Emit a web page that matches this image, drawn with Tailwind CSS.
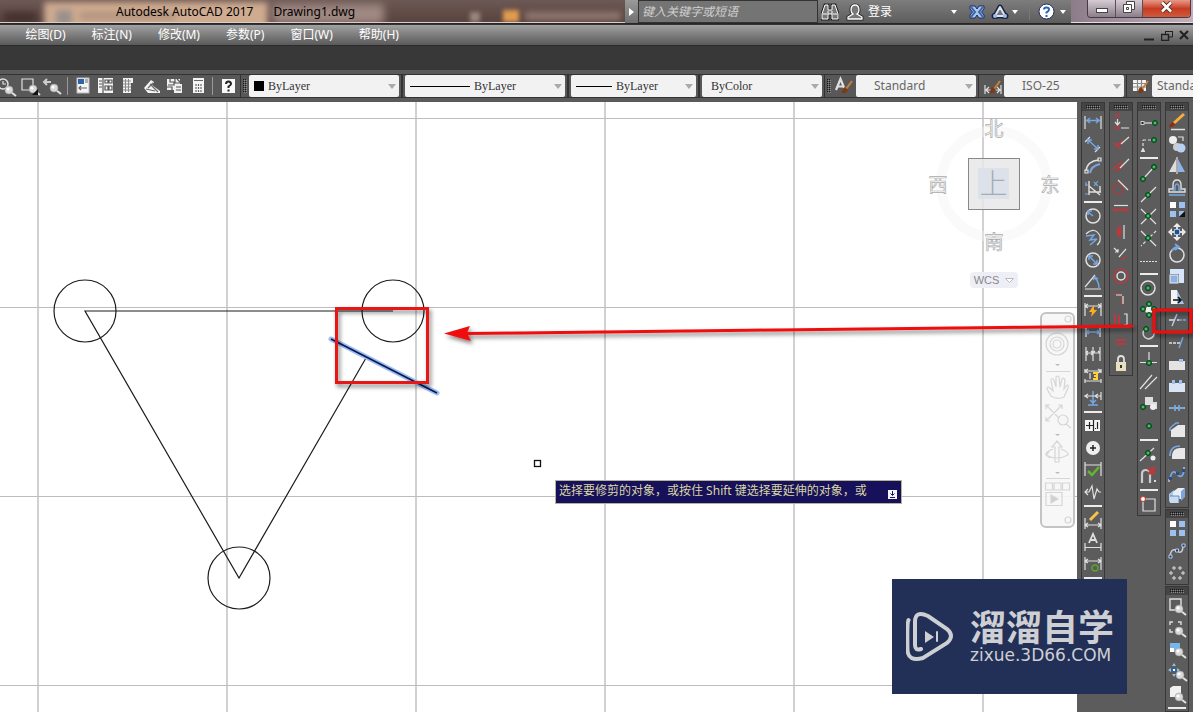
<!DOCTYPE html>
<html lang="zh-CN">
<head>
<meta charset="utf-8">
<meta name="viewport" content="width=device-width, initial-scale=1">
<title>Autodesk AutoCAD 2017 - Drawing1.dwg</title>
<script src="https://cdn.jsdelivr.net/npm/@tailwindcss/browser@4"></script>
</head>
<body class="relative flex h-screen flex-col overflow-hidden bg-[#5c5c5c] font-['Noto_Sans','Noto_Sans_CJK_SC',sans-serif] text-xs">

<!-- Title bar -->
<header class="flex h-6 shrink-0 border-b border-[#2b2626] bg-[#5b4743]">
  <div class="relative min-w-0 flex-1 overflow-hidden border-b border-[#d8cfca] bg-linear-to-b from-[#6c5854] to-[#59433f]">
    <div class="absolute top-0.5 left-11 h-7 w-56 bg-[#cfac90] blur-[3px]"></div>
    <div class="absolute top-2.5 left-14 h-4 w-4 bg-[#9a8f8c] blur-[3px]"></div>
    <div class="absolute top-3 left-20 h-2 w-24 bg-[#b3947e] blur-[3px]"></div>
    <div class="absolute top-1 left-68 h-5 w-28 bg-[#a08983] blur-[4px]"></div>
    <div class="absolute top-3 left-1 h-3 w-8 bg-[#46332f] blur-[3px]"></div>
    <div class="absolute top-3 left-[470px] h-2.5 w-2.5 bg-[#9b8680] blur-[2px]"></div>
    <div class="absolute top-2.5 left-[503px] h-3 w-4 bg-[#e09b50] blur-[2px]"></div>
    <div class="absolute top-3 left-[525px] h-2 w-24 bg-[#927a72] blur-[3px]"></div>
    <h1 class="relative flex gap-5 pt-0.5 pl-[116px] leading-5 whitespace-nowrap text-black"><span>Autodesk AutoCAD 2017</span><span>Drawing1.dwg</span></h1>
  </div>
  <div class="flex shrink-0 items-center bg-linear-to-b from-[#7d7d7d] to-[#5d5d5d] text-white">
    <button aria-label="展开搜索" class="flex h-full w-[13px] items-center justify-center bg-linear-to-b from-[#9a9a9a] to-[#707070]"><svg width="5" height="8"><path d="M0 0L5 4L0 8Z" fill="#fff"/></svg></button>
    <input aria-label="搜索" placeholder="键入关键字或短语" class="h-full w-[180px] border border-[#333] bg-[#747474] px-[3px] italic outline-none placeholder:text-[#d0d0d0]">
    <button aria-label="查找" class="flex w-[24px] justify-center"><svg width="18" height="18" fill="#777" stroke="#222" stroke-width="3"><path d="M4 2h3v5h4V2h3l3 9v5h-6v-5H7v5H1v-5Z"/><path d="M4 2h3v5h4V2h3l3 9v5h-6v-5H7v5H1v-5Z" stroke="#fff" stroke-width="1"/><path d="M7 8v3M11 8v3M2 11h4M12 11h4" stroke="#fff" stroke-width="1"/></svg></button>
    <button class="flex items-center gap-1 pl-1 text-xs leading-5"><svg width="18" height="18" fill="#777" stroke="#222" stroke-width="3"><path d="M9 2q4 0 4 5q0 3-2 4l5 3v2H2v-2l5-3q-2-1-2-4q0-5 4-5Z"/><path d="M9 2q4 0 4 5q0 3-2 4l5 3v2H2v-2l5-3q-2-1-2-4q0-5 4-5Z" stroke="#fff" stroke-width="1.3"/></svg>登录</button>
    <button aria-label="登录选项" class="ml-[59px] w-2"><svg width="6" height="4"><path d="M0 0H6L3 4Z" fill="#fff"/></svg></button>
    <button aria-label="Exchange" class="ml-2.5"><svg width="16" height="16"><path d="M1 2H6L8 5L10 2H15V5L12.500 8L15 11V14H10L8 11L6 14H1V11L3.500 8L1 5Z" fill="#a9c7ec" stroke="#1d2c6b"/><path d="M2 3L6 8L2 13M14 3L10 8L14 13" fill="none" stroke="#3562ad" stroke-width="2"/></svg></button>
    <button aria-label="A360" class="ml-1.5"><svg width="18" height="16"><path d="M9 3L14 12H4Z" fill="none" stroke="#1c2340" stroke-width="5" stroke-linejoin="round"/><circle cx="3.500" cy="12" r="3" fill="#1c2340"/><circle cx="14.500" cy="12" r="3" fill="#1c2340"/><path d="M9 3L14 12H4Z" fill="#777" stroke="#d8e3f5" stroke-width="2" stroke-linejoin="round"/><circle cx="4" cy="12" r="2" fill="#9bbbe6"/><circle cx="14" cy="12" r="2" fill="#9bbbe6"/></svg></button>
    <button aria-label="A360 选项" class="ml-[3px] w-2"><svg width="6" height="4"><path d="M0 0H6L3 4Z" fill="#fff"/></svg></button>
    <span class="ml-[9px] h-4 w-px bg-[#777]"></span>
    <button aria-label="帮助" class="ml-2"><svg width="17" height="17"><circle cx="8.500" cy="8.500" r="7.500" fill="#fff" stroke="#1d2c55"/><path d="M6 6.500Q6 4.500 8.500 4.500T11 6.800Q11 8 8.500 9.300V10.500M8.500 12v2" fill="none" stroke="#2a62b8" stroke-width="2"/></svg></button>
    <button aria-label="帮助选项" class="mr-[3px] ml-[5px] w-2"><svg width="6" height="4"><path d="M0 0H6L3 4Z" fill="#fff"/></svg></button>
  </div>
  <div class="flex w-[122px] shrink-0 items-start border-b border-[#e6dce4] bg-linear-to-r from-[#8c7c8a] to-[#c2afba] pl-4">
    <div class="flex h-[18px] overflow-hidden rounded-b-sm border border-t-0 border-[#443b44]">
      <button aria-label="最小化" class="flex w-7 items-end justify-center border-r border-[#5a505a] bg-linear-to-b from-[#d6ccd4] to-[#8c7e8a] pb-1"><svg width="12" height="5"><rect x=".5" y=".5" width="11" height="4" fill="#fff" stroke="#444"/></svg></button>
      <button aria-label="还原" class="flex w-[27px] items-center justify-center border-r border-[#5a505a] bg-linear-to-b from-[#d6ccd4] to-[#8c7e8a] pb-1"><svg width="12" height="12"><path d="M3.500 .5h8v8h-3v3h-8v-8h3Z" fill="#fff" stroke="#444"/><path d="M3.500 3.500h5v5M3.500 6.500h2v2h-2Z" fill="none" stroke="#444"/></svg></button>
      <button aria-label="关闭" class="flex w-[47px] items-center justify-center bg-linear-to-b from-[#e79a88] via-[#c83a22] to-[#cf5a3c] pb-1"><svg width="13" height="12"><path d="M2 1.500L11 10.500M11 1.500L2 10.500" stroke="#55302a" stroke-width="4.500"/><path d="M2 1.500L11 10.500M11 1.500L2 10.500" stroke="#fff" stroke-width="2.500"/></svg></button>
    </div>
  </div>
</header>

<!-- Menu bar -->
<nav class="flex h-[21px] shrink-0 items-center justify-between border-t border-[#333] bg-linear-to-b from-[#a2a2a2] to-[#5a5a5a] text-white">
  <div class="-ml-[41px] flex gap-[26px] leading-5 whitespace-nowrap">
    <button>格式(O)</button><button>绘图(D)</button><button>标注(N)</button><button>修改(M)</button><button>参数(P)</button><button>窗口(W)</button><button>帮助(H)</button>
  </div>
  <div class="flex items-center gap-1.5 pr-1">
    <button aria-label="最小化图形"><svg width="11" height="11"><path d="M0 9.500h10" stroke="#222" stroke-width="2"/></svg></button>
    <button aria-label="还原图形"><svg width="12" height="11" fill="none" stroke="#222"><path d="M4 1.500h8M4.500 1v4M11.500 1v6H8" /><path d="M0 4.500h8M.5 4v6.500h7V4" stroke-width="1.500"/></svg></button>
    <button aria-label="关闭图形"><svg width="10" height="10"><path d="M1 1L9 9M9 1L1 9" stroke="#222" stroke-width="2.200"/></svg></button>
  </div>
</nav>
<div class="h-[25px] shrink-0 border-t border-[#2c2c2c] bg-[#383838]"></div>

<!-- Standard / properties / styles toolbars -->
<div class="h-8 shrink-0 overflow-hidden bg-[#5a5a5a] pt-1">
  <div class="flex h-6 items-center border-y border-[#333] bg-[#585858]">
    <div class="-ml-[5px] flex h-full shrink-0 items-center pr-px" data-bar="standard"></div>
    <div class="flex h-full w-[9px] shrink-0 items-center justify-center border-l border-[#333]" data-vgrip></div>
    <label class="flex h-[22px] w-[150px] shrink-0 items-center rounded-xs bg-[#f2f2f2] pr-[3px] pl-[5px]"><span class="h-2.5 w-2.5 bg-black"></span><select aria-label="颜色" class="ml-1 min-w-0 flex-1 appearance-none bg-transparent font-['Liberation_Serif',serif] text-xs text-[#333]"><option>ByLayer</option></select><svg width="8" height="5"><path d="M0 0H8L4 5Z" fill="#aaa"/></svg></label>
    <span class="mx-0.5 h-full w-0.5 shrink-0 border-x border-[#333]"></span>
    <label class="flex h-[22px] w-[160px] shrink-0 items-center rounded-xs bg-[#f2f2f2] pr-[3px] pl-[5px]"><span class="h-px w-[60px] bg-black"></span><select aria-label="线型" class="ml-1 min-w-0 flex-1 appearance-none bg-transparent font-['Liberation_Serif',serif] text-xs text-[#333]"><option>ByLayer</option></select><svg width="8" height="5"><path d="M0 0H8L4 5Z" fill="#aaa"/></svg></label>
    <span class="mx-0.5 h-full w-0.5 shrink-0 border-x border-[#333]"></span>
    <label class="flex h-[22px] w-[125px] shrink-0 items-center rounded-xs bg-[#f2f2f2] pr-[3px] pl-[5px]"><span class="h-px w-9 bg-black"></span><select aria-label="线宽" class="ml-1 min-w-0 flex-1 appearance-none bg-transparent font-['Liberation_Serif',serif] text-xs text-[#333]"><option>ByLayer</option></select><svg width="8" height="5"><path d="M0 0H8L4 5Z" fill="#aaa"/></svg></label>
    <span class="mx-0.5 h-full w-0.5 shrink-0 border-x border-[#333]"></span>
    <label class="flex h-[22px] w-[120px] shrink-0 items-center rounded-xs bg-[#f2f2f2] pr-[3px] pl-[9px]"><select aria-label="打印样式" class="min-w-0 flex-1 appearance-none bg-transparent font-['Liberation_Serif',serif] text-xs text-[#333]"><option>ByColor</option></select><svg width="8" height="5"><path d="M0 0H8L4 5Z" fill="#aaa"/></svg></label>
    <div class="ml-0.5 flex h-full w-[9px] shrink-0 items-center justify-center border-l border-[#333]" data-vgrip></div>
    <div class="flex shrink-0" data-bar="text"></div>
    <label class="flex h-[22px] w-[120px] shrink-0 items-center rounded-xs bg-[#f2f2f2] pr-[3px] pl-[18px]"><select aria-label="文字样式" class="min-w-0 flex-1 appearance-none bg-transparent text-xs leading-5 text-[#666]"><option>Standard</option></select><svg width="8" height="5"><path d="M0 0H8L4 5Z" fill="#aaa"/></svg></label>
    <span class="ml-0.5 h-full w-px shrink-0 bg-[#333]"></span>
    <div class="flex shrink-0 pl-0.5" data-bar="dim"></div>
    <label class="flex h-[22px] w-[120px] shrink-0 items-center rounded-xs bg-[#f2f2f2] pr-[3px] pl-[18px]"><select aria-label="标注样式" class="min-w-0 flex-1 appearance-none bg-transparent text-xs leading-5 text-[#666]"><option>ISO-25</option></select><svg width="8" height="5"><path d="M0 0H8L4 5Z" fill="#aaa"/></svg></label>
    <span class="ml-0.5 h-full w-px shrink-0 bg-[#333]"></span>
    <div class="flex shrink-0 pl-0.5" data-bar="table"></div>
    <label class="flex h-[22px] w-[120px] shrink-0 items-center rounded-xs bg-[#f2f2f2] pr-[3px] pl-[5px]"><select aria-label="表格样式" class="min-w-0 flex-1 appearance-none bg-transparent text-xs leading-5 text-[#666]"><option>Standard</option></select></label>
  </div>
</div>

<main class="flex min-h-0 flex-1">
  <!-- Drawing area -->
  <section aria-label="绘图区" class="relative min-w-0 flex-1 overflow-hidden bg-white">
    <svg class="absolute inset-0 h-full w-full" fill="none">
      <defs><pattern id="grid" x="36" y="16" width="189" height="189" patternUnits="userSpaceOnUse"><path d="M2 0V189" stroke="#bdbdc1" stroke-width="1.400"/><path d="M0 .5H189" stroke="#bdbdc1"/></pattern></defs>
      <rect width="100%" height="100%" fill="url(#grid)"/>
      <g stroke="#1c1c1c" stroke-width="1.200">
        <circle cx="85" cy="209" r="31"/><circle cx="393" cy="209" r="31"/><circle cx="239" cy="476" r="31"/>
        <path d="M393 209H85L239 476L366 256"/>
      </g>
      <path d="M331 237L437 291" stroke="#9dbdf5" stroke-width="5" stroke-linecap="round"/>
      <path d="M331 237L437 291" stroke="#0a1a50" stroke-width="1.800"/>
      <rect x="534.500" y="358.500" width="6" height="6" stroke="#111" stroke-width="1.300"/>
    </svg>

    <!-- View cube -->
    <div class="absolute top-4 right-4 w-[135px]">
      <svg class="overflow-visible" width="135" height="140" fill="none" font-size="19" text-anchor="middle">
        <circle cx="68" cy="66" r="53" stroke="#f3f3f5" stroke-opacity=".4" stroke-width="10"/>
        <rect x="42.500" y="40.500" width="51" height="51" fill="#e8e8e8" fill-opacity=".85" stroke="#888"/>
        <rect x="52" y="50" width="31" height="31" fill="#dde2ea"/>
        <text x="67.500" y="76" font-size="28" font-weight="300" fill="#a4acb6">上</text>
        <g fill="#fff" stroke="#aaa" stroke-width=".7">
          <text x="68" y="18">北</text><text x="12" y="74">西</text><text x="124" y="74">东</text><text x="68" y="131">南</text>
        </g>
      </svg>
      <button class="mt-3.5 ml-11 flex h-4 w-12 items-center justify-center gap-1.5 rounded bg-[#eeeef6] font-['Liberation_Sans',sans-serif] text-[11px] text-[#888]">WCS<svg width="9" height="5"><path d="M.5 .5H8.500L4.500 4.500Z" fill="#fff" stroke="#bbb"/></svg></button>
    </div>

    <!-- Navigation bar -->
    <div class="absolute top-[210px] right-0.5 h-[216px] w-[35px] rounded-md border-2 border-[#c4c4c4] bg-[#f6f6f6]/90">
      <svg width="31" height="211" fill="none" stroke="#d6d6d6" stroke-width="1.200">
        <circle cx="26" cy="5" r="3"/><circle cx="26" cy="206" r="3"/>
        <circle cx="15" cy="30" r="11"/><circle cx="15" cy="30" r="7"/><circle cx="15" cy="30" r="4"/>
        <path d="M13 50h5l-2.500 2ZM13 120h5l-2.500 2ZM13 158h5l-2.500 2Z" fill="#bbb" stroke="none"/>
        <path d="M4 57.500H28M4 164.500H28"/>
        <path d="M9 82L5 75Q5 72 8 74L11 77L9 66Q10 63 12 66L14 73L14 63Q16 61 17 63L18 73L20 65Q22 63 23 66L22 75L25 71Q27 71 26 74L22 83Q15 86 9 82Z"/>
        <path d="M4 91L20 107M20 91L4 107M4 95V91H8M16 91H20V95M4 103V107H8"/><circle cx="21" cy="106" r="5" fill="#f6f6f6"/><path d="M24 110L29 114"/>
        <path d="M13 148V133H10L15 127L20 133H17V148ZM11 135Q3 138 4 141Q15 147 26 141Q27 138 19 135M7 138L4 141L8 144"/>
        <path d="M3.500 169h7v7h-7ZM12 169h7v7h-7ZM20.500 169h7v7h-7ZM4 178.500h16v13H4Z"/><path d="M9 181V189L16 185Z" fill="#d0d0d0"/>
      </svg>
    </div>

    <!-- Dynamic input prompt -->
    <div role="status" class="absolute top-[378px] left-[555px] flex h-6 items-center gap-[21px] border border-[#b5b596] bg-[#17105a] pr-1 pl-[3px] whitespace-nowrap text-[#d9d6a5]"><span class="pb-0.5">选择要修剪的对象，或按住 Shift 键选择要延伸的对象，或</span><button aria-label="选项" class="mt-1"><svg width="9" height="9"><rect width="9" height="9" fill="#f4f4ff"/><path d="M4.500 1V5M2.500 3.500L4.500 5.500L6.500 3.500M2 7.500H7" fill="none" stroke="#17105a"/></svg></button></div>
  </section>

  <!-- Docked tool palettes -->
  <aside class="flex w-[116px] shrink-0 items-start gap-1 bg-[#5c5c5c] pl-1">
    <div class="w-6 border border-[#383838]" data-bar="dimension"></div>
    <div class="w-6 border border-[#383838]" data-bar="constraint"></div>
    <div class="w-6 border border-[#383838]" data-bar="snap"></div>
    <div class="flex w-6 flex-col gap-px">
      <div class="border border-[#383838]" data-bar="modify"></div>
      <div class="border border-[#383838]" data-bar="modify2"></div>
      <div class="border border-[#383838]" data-bar="zoom"></div>
    </div>
  </aside>
</main>

<!-- Annotations -->
<svg class="pointer-events-none absolute inset-0 h-full w-full" fill="none" aria-hidden="true">
  <defs><filter id="soft" x="-5%" y="-50%" width="110%" height="250%"><feDropShadow dx="2" dy="3" stdDeviation="2" flood-opacity=".5"/></filter></defs>
  <g filter="url(#soft)">
    <rect x="336.500" y="308.500" width="91" height="74" stroke="#e91313" stroke-width="3"/>
    <path d="M466 333.500L1133 326" stroke="#f00d0d" stroke-width="3"/>
    <path d="M444 333.500L470 326L467 333L471 341Z" fill="#f00d0d"/>
    <rect x="1154" y="310" width="37" height="22" stroke="#f00d0d" stroke-width="3"/>
  </g>
</svg>

<!-- Site badge -->
<div class="absolute right-[66px] bottom-[18px] flex h-[115px] w-[235px] items-center bg-[#222f57] pl-3.5 text-[#cdcfd3]">
  <svg width="48" height="50" fill="none" stroke="#cdcfd3" stroke-width="4" stroke-linecap="round"><path d="M2.500 8Q1 10 1.500 38Q2 50 17 46L41 31Q49 24 41 17L22 4Q9-2 9 10V33Q9 39 15 37"/><path d="M19 19V31L28 25Z" fill="#cdcfd3" stroke="none"/><path d="M31 20V29" stroke-width="2"/></svg>
  <div class="ml-4 whitespace-nowrap"><p class="font-['Noto_Sans_CJK_SC',sans-serif] text-4xl leading-9 font-bold">溜溜自学</p><p class="font-['DejaVu_Sans',sans-serif] text-[17px] leading-6">zixue.3D66.COM</p></div>
</div>

<script>
const W = '#e0e0e0', B = '#78a6e0', R = '#b83a3e';
const p = (c, d, s = 1.2) => `<path d="${d}" fill="none" stroke="${c}" stroke-width="${s}"/>`;
const w = (d, s) => p(W, d, s), b = (d, s) => p(B, d, s), r = (d, s) => p(R, d, s);
const f = (c, d) => `<path d="${d}" fill="${c}"/>`;
const dot = (x, y) => `<circle cx="${x}" cy="${y}" r="2.500" fill="#1c8a35" stroke="#042"/><circle cx="${x}" cy="${y}" r="1" fill="#7b7"/>`;
const ring = (x, y, q, c = W) => `<circle cx="${x}" cy="${y}" r="${q}" fill="none" stroke="${c}" stroke-width="1.500"/>`;
const lens = (x, y) => w(`M${x + 2} ${y + 2}L${x + 7} ${y + 6}`, 2) + `<circle cx="${x}" cy="${y}" r="4" fill="#d9d9d9" stroke="#999" stroke-width=".6"/><circle cx="${x - 1}" cy="${y - 1}" r="1.500" fill="#fff"/>`;
const ends = w('M4 5V18M20 5V18');
const brush = f('#7c3a17', 'M9 18Q9 13 12 12L15 15Q13 19 9 18Z') + p('#c9813a', 'M13.500 13.500L19 6', 2);

const bars = {
  standard: [
    ['实时缩放', ring(8, 9, 5) + w('M8 6V9H11') + lens(14, 15)],
    ['窗口缩放', w('M4 4H15V15H4Z') + lens(15, 14) + f('#111', 'M20 14V20H14Z')],
    ['缩放上一个', p('#ccc', 'M10 7H3M6 4L3 7L6 10', 2) + lens(13, 13)], 'v',
    ['特性', '<rect x="6" y="3" width="12" height="15" fill="#f4f4f4" stroke="#bbb"/>' + f('#2d64a8', 'M7 4h6v5H7Z') + p('#666', 'M14 5h3M14 7h3M8 13h8M10 11L8 13L10 15')],
    ['设计中心', '<rect x="4" y="3" width="15" height="15" fill="#f4f4f4"/>' + p('#555', 'M9 3V18M5 6h3M5 9h3M5 12h3M11 5h3v3h-3ZM15 5h3v3h-3ZM11 11h3v4h-3ZM15 11h3v4h-3Z')],
    ['工具选项板', f('#f0f0f0', 'M6 3H16V8H14V18H6Z') + p('#888', 'M6 6h8M6 9h8M6 12h8M6 15h8M8.500 4V17M11.500 4V17', 1)],
    ['图纸集', f('#f4f4f4', 'M4 13L11 5L14 7L12 10L20 16V18H8Z') + p('#666', 'M6 14L15 16M10 9L18 17M13 8L8 13')],
    ['标记集', f('#f0f0f0', 'M4 4H17V9H19V18H11V15H4Z') + p('#555', 'M7 3V7H11V10H5M12 4V8H18M4 12H9V15M13 12H18M13 15H18M14 4L17 7')],
    ['计算器', '<rect x="7" y="3" width="11" height="15" fill="#f4f4f4"/>' + p('#666', 'M8 5.500H17M10 9V17M12.500 9V17M15 9V17') + p('#f4f4f4', 'M8 11.500H17M8 14.500H17')], 'v',
    ['帮助', '<rect x="6" y="4" width="13" height="14" fill="#f8f8f8"/>' + p('#222', 'M10 9Q10 6.500 12.500 6.500T15 9Q15 10 12.500 11.500V13M12.500 14.500V16.500', 2)]],
  text: [['文字样式', w('M3 15L7.500 4L12 15M5 11.500H10', 2.2) + brush]],
  dim: [['标注样式', w('M4 10V19M20 10V19M5 15H19M8 12L5 15L8 18M16 12L19 15L16 18') + brush]],
  table: [['表格样式', '<rect x="4" y="5" width="13" height="11" fill="#f4f4f4"/>' + p('#888', 'M4 8.500H17M4 12H17M8.500 5V16M12.500 5V16') + brush]],
  dimension: [
    ['线性', ends + b('M5 9.500H19M9 7L6 9.500L9 12M15 7L18 9.500L15 12', 1.5)],
    ['对齐', w('M4 9L9 4M14 19L19 14') + b('M7 7L17 16M7 11V7H11M17 12V16H13', 1.5)],
    ['弧长', w('M5 16Q6 6 18 5', 1.5) + b('M9 18Q10 11 19 9', 2) + w('M4 15H7V18H4ZM17 3H20V6H17Z')],
    ['坐标', w('M8 4V18M8 9L19 18M19 9V15M8 15H20', 1.4) + b('M4 8H7M13 5L17 9M17 4L13 9M4 17H7M5 5V9')], 's',
    ['半径', ring(12, 11, 7) + b('M12 11L7 7M7 10V6H11', 1.5)],
    ['折弯', p(W, 'M5 7Q14-1 19 9Q20 15 16 18') + b('M5 9L13 8L9 13L16 12M9 18L16 12', 1.5)],
    ['直径', ring(12, 11, 7) + b('M8 7L16 15M8 11V7H12M16 11V15H12', 1.5)],
    ['角度', w('M4 18H20M4 16L14 4') + b('M14 7Q18 11 18 17M12 9L14 6L17 8', 1.5)], 's',
    ['快速标注', w('M4 4V17M20 4V17M4 7H20M7 5L4 7L7 9M17 5L20 7L17 9') + f('#ffae22', 'M13 6L8 13H11L10 18L16 11H13Z')],
    ['基线', w('M5 5V16M19 5V16') + b('M5 11H19M8 9L5 11L8 13M16 9L19 11L16 13', 1.5)],
    ['连续', w('M5 4V18M12 4V18M19 4V18M5 10H19M7 8L5 10L7 12M10 8L12 10L10 12M14 8L12 10M17 8L19 10')],
    ['等距标注', w('M4 4V8M20 4V8M4 6H20M7 4L4 6L7 8M17 4L20 6L17 8M4 14V18M20 14V18M4 16H20') + p('#ffd13a', 'M12 8H16V14H12M16 11H13', 2) + w('M9 8V14')],
    ['折断标注', b('M12 4V18M7 18H17M9 13L12 16L15 13', 1.5) + w('M3 9H20M7 7L4 9L7 11M17 7L14 9L17 11M20 5V13')], 's',
    ['公差', '<rect x="4" y="5" width="15" height="11" fill="#f4f4f4"/>' + p('#222', 'M12.500 5V16M5 10.500H12M8.500 7V14M14 13.500h1M16.500 7V14')],
    ['圆心标记', '<circle cx="12" cy="11" r="7" fill="#eee"/>' + p('#222', 'M9 11H15M12 8V14', 1.5)],
    ['检验', w('M4 3V17M20 3V17M4 6H20') + p('#62b72e', 'M7 12L11 16L18 8', 2.5)],
    ['折弯线性', w('M4 11H8L11 5L13 18L16 8L18 11H20M7 8L4 11L7 14')], 's',
    ['编辑标注', w('M4 9V20M20 9V20M4 16H20M7 14L4 16L7 18M17 14L20 16L17 18') + p('#f7c34d', 'M9 11L17 3', 3)],
    ['编辑文字', w('M4 12V20M20 12V20M4 16.500H20') + w('M8 12L12 3L16 12M10 9H14', 1.8)],
    ['更新标注', w('M4 4V17M20 4V17M4 8H20M7 6L4 8L7 10M17 6L20 8L17 10') + ring(14, 15, 3, '#5ca12e')], 's'],
  constraint: [
    ['重合', r('M7 3h3v3H7ZM7 15h3v3H7Z') + w('M8.500 8V14M6 11L8.500 14L11 11M12 17H20')],
    ['垂直', r('M5 10L12 16M8 12L14 8', 2) + w('M12 11L20 4')],
    ['平行', r('M4 14L13 7M7 16L15 10', 2) + w('M11 13L20 4')],
    ['相切', ring(9, 12, 5, '#a83c40') + w('M9 3L19 13')],
    ['水平', w('M5 6.500H19') + r('M4 11H20', 2.5)],
    ['竖直', r('M11 5V16M9 7V15', 2.5) + w('M15 4V18')],
    ['共线', w('M5 5L9 9M9 6V9H6M10 14L17 6') + r('M12 17L18 13')],
    ['同心', ring(12, 11, 4) + ring(12, 11, 7, R)],
    ['平滑', r('M4 7H12M13 10V18', 1.2) + w('M7 8H13M14 9V17')],
    ['对称', r('M6 5V16M10 6V15', 2) + w('M15 5H18V16H15')],
    ['相等', r('M7 9H17M7 13H17', 2)],
    ['固定', w('M9 10V6Q9 3 12 3T15 6V10', 1.8) + '<rect x="7" y="9" width="10" height="9" fill="#eadfc0"/>' + p('#333', 'M12 12V15', 2)]],
  snap: [
    ['临时追踪点', w('M6 12H16') + '<rect x="4" y="10.500" width="3" height="3" fill="#222" stroke="#ccc"/>' + dot(18, 12)],
    ['捕捉自', `<g stroke-dasharray="3 2">${w('M6 18V7M6 7H16')}</g>` + f(W, 'M4 18L6 15L8 18V19H4Z') + dot(17, 7)], 's',
    ['端点', w('M6 18L17 6') + dot(17, 6) + dot(6, 18)],
    ['中点', w('M4 19L19 4') + dot(11, 12)],
    ['交点', w('M4 4L19 19M19 4L4 19') + dot(11, 11)],
    ['外观交点', `<g stroke-dasharray="3 2">${w('M19 4L4 19')}</g>` + w('M4 4L19 19') + dot(11, 11)],
    ['延长线', `<g stroke-dasharray="2 1">${w('M3 12.500H20')}</g>`], 's',
    ['圆心', ring(11, 11, 7) + dot(11, 11)],
    ['象限点', '<path d="M12 6L17 11L12 16L7 11Z" fill="#eee"/>' + dot(12, 5) + dot(6, 10) + dot(17, 10) + dot(12, 16)],
    ['切点', p('#ccc', 'M7 8Q4 16 11 18Q19 17 17 8', 1.5) + dot(9, 8)], 's',
    ['垂足', w('M3 13.500H20M12 3V13') + dot(12, 14)],
    ['平行线', w('M3 18L15 4M8 18L20 6')],
    ['插入点', f('#ddd', 'M8 4H16V9H20V16H15V12H8Z') + '<circle cx="16" cy="14" r="3" fill="#eee"/>' + dot(6, 14)],
    ['节点', dot(12, 11)], 's',
    ['最近点', w('M3 18L17 5') + dot(11, 10) + `<circle cx="16" cy="15" r="2.500" fill="#eee"/>`],
    ['无捕捉', p('#ccc', 'M5 18V9Q5 5 9 5T13 9V18', 2.2) + r('M11 3L18 9M18 2L12 9', 3) + f('#ddd', 'M17 15h2v2h-2Z')], 's',
    ['捕捉设置', w('M6 6H18V18H6Z') + `<circle cx="6" cy="6" r="2.500" fill="#fff" stroke="#d33a2a"/>`]],
  modify: [
    ['删除', f('#8c2f16', 'M4 16Q5 12 8 11L11 13Q8 17 4 16Z') + p('#f8ad3e', 'M9 12L19 3', 3) + w('M6 18.500H20', 1.5)],
    ['复制', '<circle cx="8" cy="7" r="4" fill="#eee"/><circle cx="12" cy="14" r="4" fill="#ccc"/><circle cx="16" cy="15" r="4.500" fill="#b9d0ef"/>' + w('M13 4H18V8')],
    ['镜像', f('#ddd', 'M11 4V17H4Z') + f('#8fb3e4', 'M13 4V17H20Z') + w('M12 2V19')],
    ['偏移', w('M4 15V12H8V8Q8 3 12 3T16 8V12H20V15Z', 1.4) + b('M4 18H20M7 13H10V9Q12 5 14 9V13H17', 1.4)],
    ['阵列', f('#fff', 'M5 3H11V9H5Z') + f('#9cc0f0', 'M14 3H20V9H14ZM5 12H11V18H5Z') + f('#9cc0f0', 'M14 12H20L14 18Z') + f('#111', 'M20 12V18H14Z')],
    ['移动', f('#eee', 'M12 2L16 6H8ZM12 20L16 16H8ZM3 11L7 7V15ZM21 11L17 7V15Z') + w('M5 11H19M12 5V17', 2) + '<rect x="9.500" y="8.500" width="5" height="5" fill="#244f8b" stroke="#9cc0f0"/>'],
    ['旋转', ring(12, 12, 7) + b('M7 8Q9 4 13 4M10 1L14 4L10 7', 1.8)],
    ['缩放', f('#d6e5fa', 'M5 4H19V18H14V9H5Z') + '<rect x="5" y="10" width="8" height="8" fill="#8eb2e6" stroke="#eee"/>'],
    ['拉伸', f('#f4f4f4', 'M6 3H12V17H6Z') + f('#a8c7ef', 'M12 3L19 17H12Z') + p('#111', 'M8 13H16M13 10L16 13L13 16', 1.7)],
    ['修剪', w('M4 11H10M12 11H14', 1.4) + p('#b9cdea', 'M12 5L7 17', 1.4) + `<g stroke-dasharray="3 1">${b('M14 11H21', 1.4)}</g>`],
    ['延伸', `<g stroke-dasharray="3 1">${w('M4 12H15', 1.4)}</g>` + b('M18 6L14 17', 1.5)],
    ['打断于点', f('#e3e3e3', 'M4 8H20V17H4Z') + f('#9cc0f0', 'M14 6h4v3h-4Z')],
    ['打断', f('#d9e4f4', 'M4 8H20V17H4Z') + f('#9cc0f0', 'M7 5h3v4H7ZM14 5h3v4h-3Z')],
    ['合并', w('M4 11H20') + b('M5 11H10M19 11H14M10 8V14M14 8V14', 1.8)],
    ['倒角', f('#e8e8e8', 'M6 18V11L13 6H20V18Z') + b('M5 12V9L11 4H14', 1.5)],
    ['圆角', f('#e8e8e8', 'M7 18V14Q8 7 15 7H20V18Z') + b('M5 15Q5 5 15 5', 1.7)],
    ['光顺曲线', b('M5 16Q7 5 12 11T19 8', 1.7) + w('M4 19V16M19 7V4') + f('#234f8c', 'M4 14h3v3H4ZM17 6h3v3h-3ZM11 9h3v3h-3Z')],
    ['分解', f('#a9c6ec', 'M4 9L9 5V14L4 17Z') + f('#e8eef7', 'M9 6L13 3H20L16 7V14H8V8Z') + f('#7ea5da', 'M16 7L20 3V12L16 16Z') + f('#c9dbf3', 'M5 11H14V18H5Z') + p('#56779f', 'M5 11H14V18', .8)]],
  modify2: [
    ['编辑阵列', f('#fff', 'M5 3H11V9H5Z') + f('#9cc0f0', 'M14 3H20V9H14ZM5 12H11V18H5ZM14 12H20V18H14Z')],
    ['编辑样条曲线', p('#ccc', 'M5 17Q6 7 12 11T18 5', 1.5) + '<path d="M4 15h3v3H4ZM10.500 9h3v3h-3ZM17 4h3v3h-3Z" fill="#1d3a66" stroke="#b5cdf0"/>'],
    ['编辑多段线', p('#ddd', 'M8 5h2v2H8ZM14 5h2v2h-2ZM5 10h2v2H5ZM17 10h2v2h-2ZM8 15h2v2H8ZM14 15h2v2h-2Z', 1)]],
  zoom: [
    ['窗口缩放', w('M5 4H16V15H5Z', 1.4) + lens(14, 14)],
    ['动态缩放', w('M5 8V5H8M13 5H16V8M5 12V15H8', 1.4) + lens(14, 14)],
    ['比例缩放', f('#78b5e8', 'M5 4H15V13H5Z') + f('#fff', 'M5 9H9V13H5Z') + lens(14, 13)],
    ['中心缩放', f('#8fc0ea', 'M9 2L11 5H7ZM9 16L11 13H7ZM3 9L6 7V11ZM15 9L12 7V11Z') + '<rect x="7.500" y="7.500" width="3" height="3" fill="#fff" stroke="#2d64a8"/>' + lens(15, 14)],
    ['缩放对象', f('#f1f1f1', 'M5 5L8 3H16V12L13 14H5Z') + lens(14, 14)], 's']
};

const grip = (width, height) => `<svg width="${width}" height="${height}" shape-rendering="crispEdges"><defs><pattern id="g${width}" width="2" height="2" patternUnits="userSpaceOnUse"><rect width="1" height="1" fill="#161616"/><rect x="1" y="1" width="1" height="1" fill="#8a8a8a"/></pattern></defs><rect width="100%" height="100%" fill="url(#g${width})"/></svg>`;

document.querySelectorAll('[data-vgrip]').forEach(el => el.innerHTML = grip(4, 14));
document.querySelectorAll('[data-bar]').forEach(el => {
  const horizontal = ['standard', 'text', 'dim', 'table'].includes(el.dataset.bar);
  el.innerHTML = (horizontal ? '' : `<div class="flex h-2 items-center justify-center bg-[#444]">${grip(14, 4)}</div>`) + bars[el.dataset.bar].map(item => {
    if (item === 's') return '<div class="flex h-1.5 items-center px-0.5"><span class="h-0.5 w-full bg-[#ececec]"></span></div>';
    if (item === 'v') return '<span class="mx-[3px] h-[18px] w-px bg-[#999]"></span>';
    return `<button class="${horizontal ? 'flex h-[22px] w-[23px] shrink-0 items-center justify-center' : 'flex h-[22px] w-full items-center justify-center'}" aria-label="${item[0]}"><svg class="shrink-0" width="24" height="22" viewBox="0 0 24 22">${item[1]}</svg></button>`;
  }).join('');
});
</script>
</body>
</html>
